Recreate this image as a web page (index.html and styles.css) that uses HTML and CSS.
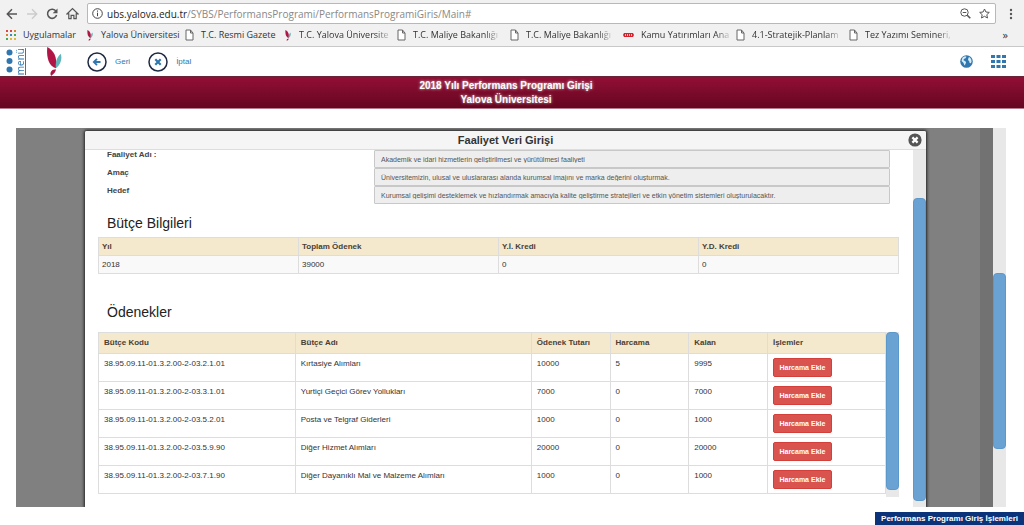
FILE: index.html
```html
<!DOCTYPE html>
<html lang="tr">
<head>
<meta charset="utf-8">
<title>Performans Programı Giriş İşlemleri</title>
<link rel="stylesheet" href="styles.css">
</head>
<body>
<svg class="defs" aria-hidden="true">
  <symbol id="page" viewBox="0 0 9 12"><path d="M1 1h4.500l2.500 3v7H1z M5.500 1v3H8" fill="#fff" stroke="#666"/></symbol>
  <symbol id="bird" viewBox="0 0 16 30">
    <path d="M1 0C7 3 12 10 10 22C3 20 0 12 1 0z" fill="#b01545"/>
    <path d="M15 7c2 6-1 12-5 15c-1-6 1-12 5-15z" fill="#62b5bb"/>
    <path d="M10 23c0 3-2 4-5 7c-2-4 1-7 5-7z" fill="#b01545"/>
  </symbol>
</svg>
<header class="browser">
  <div class="toolbar">
    <button class="tool" aria-label="Geri git"><svg width="12" height="12" viewBox="0 0 12 12" fill="none" stroke="#555" stroke-width="1.500"><path d="M11 6H1.500M6 1.300L1.300 6L6 10.700"/></svg></button>
    <button class="tool" aria-label="İleri git"><svg width="12" height="12" viewBox="0 0 12 12" fill="none" stroke="#ccc" stroke-width="1.500"><path d="M1 6h9.500M6 1.300L10.700 6L6 10.700"/></svg></button>
    <button class="tool" aria-label="Yenile"><svg width="12" height="12" viewBox="0 0 12 12" fill="none" stroke="#555" stroke-width="1.500"><path d="M10 3.200A4.600 4.600 0 1 0 10.600 7"/><path d="M11.500 .5v4.800H6.700z" fill="#555" stroke="none"/></svg></button>
    <button class="tool" aria-label="Giriş sayfası"><svg width="13" height="13" viewBox="0 0 14 13" fill="none" stroke="#555" stroke-width="1.300"><path d="M1 7L7 1.200L13 7H11v5H8.500V8.500h-3V12H3V7z"/></svg></button>
    <div class="address">
      <svg width="11" height="11" viewBox="0 0 11 11" fill="none" stroke="#444"><circle cx="5.500" cy="5.500" r="4.800"/><path d="M5.500 4.700v3.500M5.500 2.500v1.200"/></svg>
      <span class="url"><b>ubs.yalova.edu.tr</b>/SYBS/PerformansProgrami/PerformansProgramiGiris/Main#</span>
      <svg width="11" height="11" viewBox="0 0 11 11" fill="none" stroke="#555"><circle cx="4.500" cy="4.500" r="3.700"/><path d="M2.700 4.500h3.600"/><path d="M7.200 7.200L10.300 10.300" stroke-width="1.600"/></svg>
      <svg width="11" height="11" viewBox="0 0 11 11" fill="none" stroke="#555"><path d="M5.500 1l1.400 3 3.400.4-2.500 2.300.7 3.300-3-1.700-3 1.700.7-3.300L.7 4.400 4.100 4z"/></svg>
    </div>
    <button class="tool" aria-label="Menü"><svg width="4" height="12" viewBox="0 0 4 12" fill="#555"><circle cx="2" cy="2" r="1.200"/><circle cx="2" cy="6" r="1.200"/><circle cx="2" cy="10" r="1.200"/></svg></button>
  </div>
  <nav class="bookmarks">
    <a href="#" class="apps"><svg width="10" height="10" viewBox="0 0 10 10"><path d="M0 0h2v2H0zM4 0h2v2H4z" fill="#d44"/><path d="M8 0h2v2H8zM0 4h2v2H0z" fill="#d9822b"/><path d="M4 4h2v2H4z" fill="#48b"/><path d="M8 4h2v2H8zM0 8h2v2H0z" fill="#4a5"/><path d="M4 8h2v2H4zM8 8h2v2H8z" fill="#db3"/></svg><span>Uygulamalar</span></a>
    <a href="#" class="short"><svg width="8" height="11"><use href="#bird"/></svg><span>Yalova Üniversitesi</span></a>
    <a href="#" class="short"><svg width="9" height="12"><use href="#page"/></svg><span>T.C. Resmi Gazete</span></a>
    <a href="#"><svg width="8" height="11"><use href="#bird"/></svg><span class="fade">T.C. Yalova Üniversite</span></a>
    <a href="#"><svg width="9" height="12"><use href="#page"/></svg><span class="fade">T.C. Maliye Bakanlığı</span></a>
    <a href="#"><svg width="9" height="12"><use href="#page"/></svg><span class="fade">T.C. Maliye Bakanlığı</span></a>
    <a href="#"><svg width="11" height="6" viewBox="0 0 11 6"><path d="M1 1h9l1 2-1 2H1L0 3z" fill="#d5232e"/><path d="M2.500 2v2M4.500 2v2M6.500 2v2M8.500 2v2" stroke="#f6b7ba"/></svg><span class="fade">Kamu Yatırımları Ana</span></a>
    <a href="#"><svg width="9" height="12"><use href="#page"/></svg><span class="fade">4.1-Stratejik-Planlam</span></a>
    <a href="#"><svg width="9" height="12"><use href="#page"/></svg><span class="fade">Tez Yazımı Semineri,</span></a>
    <button class="more" aria-label="Diğer yer işaretleri">»</button>
  </nav>
</header>
<div class="appbar">
  <a href="#" class="menu"><svg width="7" height="24" viewBox="0 0 7 24" fill="#2f77ae"><circle cx="3.500" cy="3.500" r="3"/><circle cx="3.500" cy="12" r="3"/><circle cx="3.500" cy="20.500" r="3"/></svg><span>menü</span></a>
  <svg class="logo" width="16" height="29"><use href="#bird"/></svg>
  <a href="#" class="action"><svg width="20" height="20" viewBox="0 0 20 20" fill="none"><circle cx="10" cy="10" r="9" stroke="#1d2a42" stroke-width="1.500"/><path d="M13.500 10H7M10 6.800L6.800 10L10 13.200" stroke="#2f77ae" stroke-width="1.800"/></svg><span>Geri</span></a>
  <a href="#" class="action"><svg width="20" height="20" viewBox="0 0 20 20" fill="none"><circle cx="10" cy="10" r="9" stroke="#1d2a42" stroke-width="1.500"/><path d="M7.300 7.300l5.400 5.400M12.700 7.300l-5.400 5.400" stroke="#2f77ae" stroke-width="2.200"/></svg><span>İptal</span></a>
  <div class="right">
    <svg width="13" height="13" viewBox="0 0 13 13"><circle cx="6.500" cy="6.500" r="6.300" fill="#2f77ae"/><path d="M2.500 2.500L5 1.200l1.500.6-1 1.400-1.600.9-.4 1.200 1.900.9.700 1.200-.9 2-.7 1.200-1.100-2.900L1.500 6zM8.500 2.500l1.300-.3 1.400 2 .4 2.500-.8 1.600-1.200-.4L9.200 6.200 8 5z" fill="#d5ebf6"/></svg>
    <svg width="15" height="13" viewBox="0 0 15 13" fill="#2f77ae"><path d="M0 0h4v3H0zM5.500 0h4v3h-4zM11 0h4v3h-4zM0 5h4v3H0zM5.500 5h4v3h-4zM11 5h4v3h-4zM0 10h4v3H0zM5.500 10h4v3h-4zM11 10h4v3h-4z"/></svg>
  </div>
</div>
<div class="banner">2018 Yılı Performans Programı Girişi<br>Yalova Üniversitesi</div>
<main class="stage">
  <div class="backdrop">
    <section class="dialog">
      <div class="dialog-head">
        <h1>Faaliyet Veri Girişi</h1>
        <button class="close" aria-label="Kapat"><svg width="14" height="14" viewBox="0 0 14 14"><circle cx="7" cy="7" r="6.600" fill="#555"/><path d="M4.400 4.400l5.200 5.200M9.600 4.400L4.400 9.600" stroke="#fff" stroke-width="2.200"/></svg></button>
      </div>
      <div class="dialog-body">
        <div class="content">
          <div class="fields">
            <label for="faaliyet">Faaliyet Adı :</label><input id="faaliyet" readonly value="Akademik ve idari hizmetlerin geliştirilmesi ve yürütülmesi faaliyeti">
            <label for="amac">Amaç</label><input id="amac" readonly value="Üniversitemizin, ulusal ve uluslararası alanda kurumsal imajını ve marka değerini oluşturmak.">
            <label for="hedef">Hedef</label><input id="hedef" readonly value="Kurumsal gelişimi desteklemek ve hızlandırmak amacıyla kalite geliştirme stratejileri ve etkin yönetim sistemleri oluşturulacaktır.">
          </div>
          <h2>Bütçe Bilgileri</h2>
          <table class="summary">
            <thead><tr><th>Yıl</th><th>Toplam Ödenek</th><th>Y.İ. Kredi</th><th>Y.D. Kredi</th></tr></thead>
            <tbody><tr><td>2018</td><td>39000</td><td>0</td><td>0</td></tr></tbody>
          </table>
          <h2 class="second">Ödenekler</h2>
          <div class="list">
            <table class="items">
              <colgroup><col class="c-code"><col class="c-name"><col class="c-num"><col class="c-num"><col class="c-num"><col></colgroup>
              <thead><tr><th>Bütçe Kodu</th><th>Bütçe Adı</th><th>Ödenek Tutarı</th><th>Harcama</th><th>Kalan</th><th>İşlemler</th></tr></thead>
              <tbody>
                <tr><td>38.95.09.11-01.3.2.00-2-03.2.1.01</td><td>Kırtasiye Alımları</td><td>10000</td><td>5</td><td>9995</td><td><button class="add">Harcama Ekle</button></td></tr>
                <tr><td>38.95.09.11-01.3.2.00-2-03.3.1.01</td><td>Yurtiçi Geçici Görev Yollukları</td><td>7000</td><td>0</td><td>7000</td><td><button class="add">Harcama Ekle</button></td></tr>
                <tr><td>38.95.09.11-01.3.2.00-2-03.5.2.01</td><td>Posta ve Telgraf Giderleri</td><td>1000</td><td>0</td><td>1000</td><td><button class="add">Harcama Ekle</button></td></tr>
                <tr><td>38.95.09.11-01.3.2.00-2-03.5.9.90</td><td>Diğer Hizmet Alımları</td><td>20000</td><td>0</td><td>20000</td><td><button class="add">Harcama Ekle</button></td></tr>
                <tr><td>38.95.09.11-01.3.2.00-2-03.7.1.90</td><td>Diğer Dayanıklı Mal ve Malzeme Alımları</td><td>1000</td><td>0</td><td>1000</td><td><button class="add">Harcama Ekle</button></td></tr>
              </tbody>
            </table>
            <div class="track list-track"><div class="thumb"></div></div>
          </div>
        </div>
        <div class="track dialog-track"><div class="thumb"></div></div>
      </div>
    </section>
  </div>
  <div class="track page-track"><div class="thumb"></div></div>
</main>
<footer class="status">Performans Programı Giriş İşlemleri</footer>
</body>
</html>
```

FILE: styles.css
```css
* { box-sizing: border-box; }
body {
  margin: 0;
  height: 100vh;
  display: flex;
  flex-direction: column;
  overflow: hidden;
  background: #fff;
  color: #333;
  font: 8px/12px "Liberation Sans", Arial, sans-serif;
}
svg { display: block; flex: none; }
.defs { position: absolute; width: 0; height: 0; }
button { border: 0; padding: 0; background: none; font: inherit; color: inherit; }
a { color: inherit; text-decoration: none; }

.browser {
  background: #f1f1f1;
  border-bottom: 1px solid #c8c8c8;
  font-family: "Open Sans", "Noto Sans", sans-serif;
}
.toolbar { display: flex; align-items: center; gap: 8px; padding: 3px 11px 0 6px; }
.tool { flex: none; }
.address {
  flex: 1;
  display: flex;
  align-items: center;
  gap: 8px;
  height: 21px;
  margin-right: 5px;
  padding: 0 5px 0 4px;
  border: 1px solid #b8b8b8;
  border-radius: 2px;
  background: #fff;
}
.url { flex: 1; margin-left: -4px; font-size: 10px; color: #888; white-space: nowrap; }
.url b { font-weight: 400; color: #222; }
.bookmarks { display: flex; align-items: center; height: 22px; padding: 0 16px 0 6px; font-size: 9px; color: #333; }
.bookmarks a { display: flex; align-items: center; gap: 7px; width: 113px; white-space: nowrap; }
.fade { mask-image: linear-gradient(90deg, #000 85%, rgba(0, 0, 0, .2)); }
.bookmarks .apps { width: 80px; }
.bookmarks .short { width: 99px; }
.more { margin-left: auto; font-size: 11px; }

.appbar { display: flex; align-items: center; height: 29px; padding: 0 18px 0 6px; color: #2f77ae; flex: none; }
.menu { display: flex; align-items: center; gap: 3px; }
.menu span {
  writing-mode: vertical-rl;
  rotate: 180deg;
  border-left: 1px solid #2f77ae;
  font: 10px/9px "Open Sans", sans-serif;
}
.logo { margin: 0 25px 0 20px; }
.action { display: flex; align-items: center; gap: 8px; margin-right: 18px; }
.right { display: flex; gap: 18px; margin-left: auto; }

.banner {
  flex: none;
  height: 33px;
  padding: 2px 12px 0 0;
  border-top: 1px solid #6b2337;
  border-bottom: 1px solid #b77c8c;
  background: linear-gradient(#930f35, #640620);
  color: #fff;
  text-align: center;
  text-shadow: 0 0 3px #ddd;
  font-size: 10px;
  font-weight: 700;
  line-height: 14px;
}

.stage { flex: 1; min-height: 0; display: flex; margin: 19px 18px 18px 16px; }
.backdrop {
  flex: 1;
  min-width: 0;
  display: flex;
  padding: 3px 54px 0 69px;
  border-right: 13px solid #727272;
  background: #808080;
  overflow: hidden;
}
.dialog {
  flex: 1;
  min-width: 0;
  display: flex;
  flex-direction: column;
  background: #fff;
  border-radius: 2px 2px 0 0;
  box-shadow: 0 0 3px 1px #222;
}
.dialog-head {
  display: grid;
  grid-template-columns: 18px 1fr 18px;
  align-items: center;
  height: 19px;
  flex: none;
  border-bottom: 1px solid #ddd;
  border-radius: 2px 2px 0 0;
  background: #f5f5f5;
}
.dialog-head h1 { grid-column: 2; margin: 0; font-size: 11px; text-align: center; }
.dialog-body { flex: 1; min-height: 0; display: flex; }
.content { flex: 1; min-width: 0; padding: 0 14px 0 13px; overflow: hidden; }
.fields {
  display: grid;
  grid-template-columns: 267px 1fr;
  grid-auto-rows: 18px;
  padding: 0 9px;
}
.fields label { font-weight: 700; line-height: 10px; color: #444; }
.fields input {
  width: 100%;
  height: 18px;
  padding: 0 6px;
  border: 1px solid #c8c8c8;
  border-radius: 1px;
  background: #eee;
  color: #555;
  font: 7px "Liberation Sans", Arial, sans-serif;
}
h2 { margin: 10px 9px 4px; font-size: 14px; font-weight: 400; line-height: 19px; color: #222; }
h2.second { margin: 29px 9px 10px; }
table { width: 100%; table-layout: fixed; border-collapse: collapse; }
th, td { border: 1px solid #ddd; text-align: left; vertical-align: top; }
th { background: #f4e8cd; color: #4a4034; }
.summary th, .summary td { padding: 3px 3px 2px; }
.summary td { background: #f9f9f9; }
.list { display: flex; align-items: flex-start; }
.items th { padding: 4px 5px; }
.items td { padding: 4px 5px; }
.c-code { width: 25%; }
.c-name { width: 30%; }
.c-num { width: 10%; }
.add {
  display: block;
  height: 19px;
  width: 59px;
  border: 1px solid #d43f3a;
  border-radius: 2px;
  background: #d9534f;
  color: #fff;
  font-size: 7px;
  font-weight: 700;
}
.track { flex: none; width: 13px; background: #e8e8e8; }
.thumb { border-radius: 4px; background: #6aa2d3; border: 1px solid #5c98ca; }
.list-track { height: 165px; }
.list-track .thumb { height: 96%; }
.dialog-track { padding-top: 48px; }
.dialog-track .thumb { height: 98%; }
.page-track { padding-top: 145px; }
.page-track .thumb { height: 75%; }

.status {
  position: fixed;
  right: 0;
  bottom: 0;
  padding: 0 6px;
  background: #0b3379;
  color: #fff;
  font-size: 8px;
  font-weight: 700;
  line-height: 13px;
}
```
